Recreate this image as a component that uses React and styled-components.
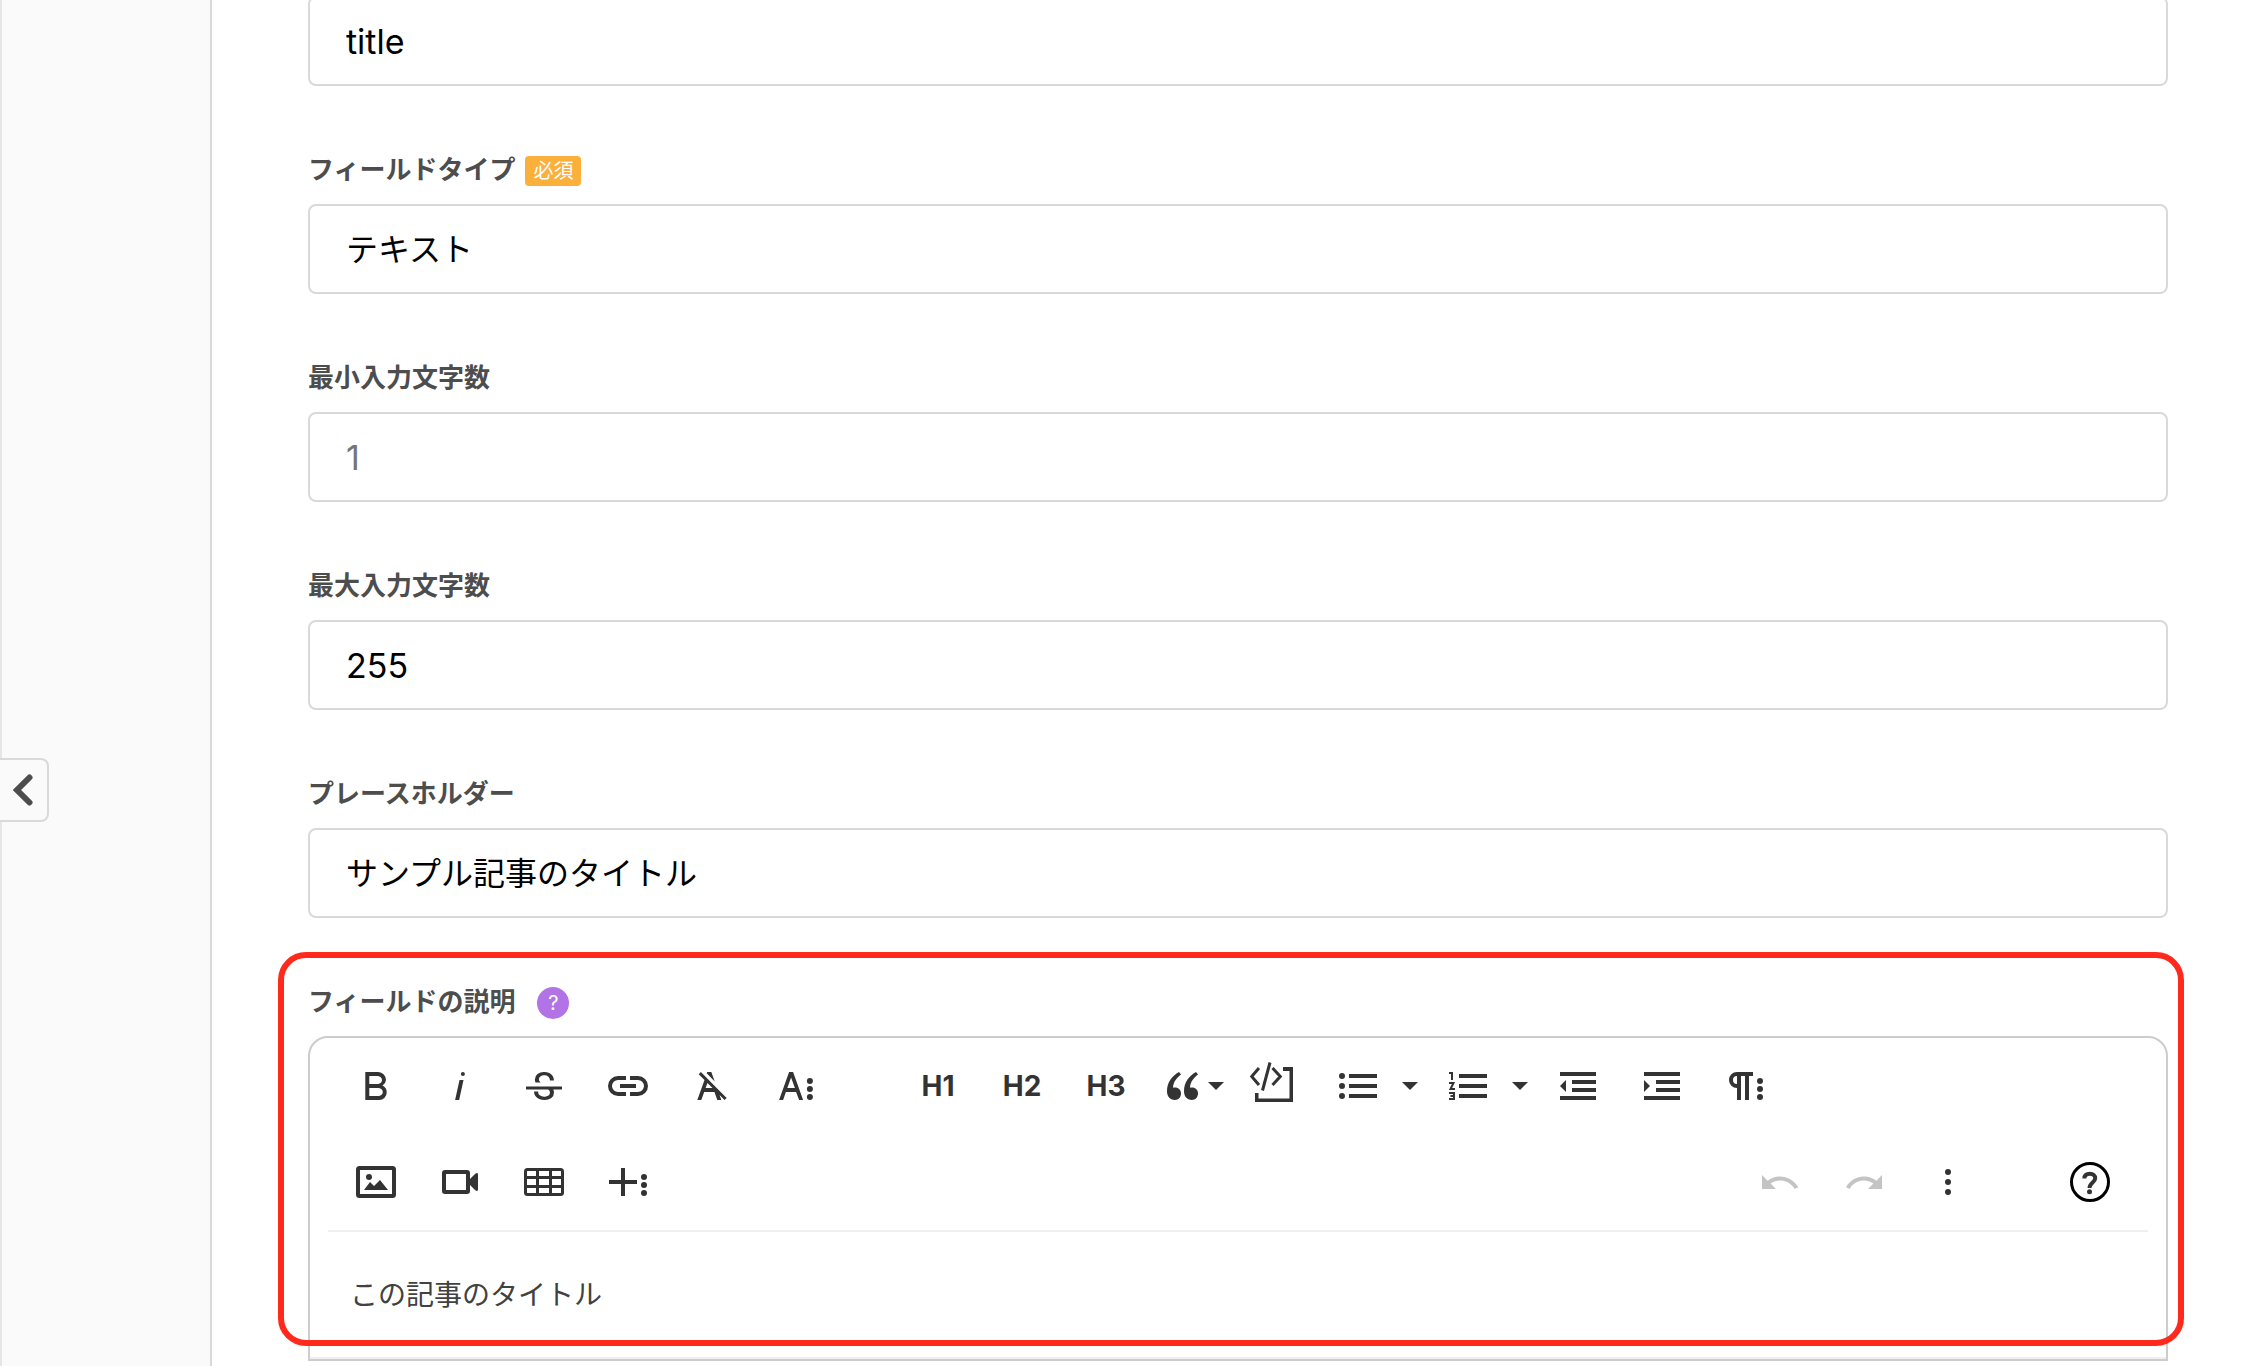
import React from "react";
import styled, { createGlobalStyle } from "styled-components";

const GlobalStyle = createGlobalStyle`
  * {
    box-sizing: border-box;
  }
  body {
    margin: 0;
    background: #fff;
    color: #4d4d4d;
    font-family: Inter, "Noto Sans CJK JP", sans-serif;
  }
  button,
  input,
  textarea {
    font-family: inherit;
  }
`;

const Page = styled.div`
  display: grid;
  grid-template-columns: 212px 1fr;
  min-height: 100vh;
`;

const Sidebar = styled.aside`
  position: relative;
  background: #fafafa;
  border-left: 2px solid #e6e6e6;
  border-right: 2px solid #d9d9d9;
`;

// sits on top of the sidebar edge
const CollapseButton = styled.button`
  position: absolute;
  top: 758px;
  left: -2px;
  display: flex;
  align-items: center;
  justify-content: center;
  width: 49px;
  height: 64px;
  padding: 0 2px 0 0;
  background: #fafafa;
  border: 2px solid #d9d9d9;
  border-left: 0;
  border-radius: 0 8px 8px 0;
  cursor: pointer;
`;

const Main = styled.main`
  overflow: hidden;
  padding: 0 92px 0 96px;
`;

const Form = styled.form`
  display: flex;
  flex-direction: column;
  gap: 64px;
  margin-top: -4px;
`;

const Field = styled.div`
  position: relative;
`;

const LabelRow = styled.div`
  display: flex;
  align-items: center;
  height: 40px;
  margin-bottom: 14px;
`;

const Label = styled.label`
  font-size: 26px;
  font-weight: 700;
  line-height: 40px;
`;

const Required = styled.span`
  margin: 2px 0 0 10px;
  padding: 0 8px;
  border-radius: 4px;
  background: #fbb03b;
  color: #fff;
  font-size: 20px;
  line-height: 30px;
`;

const HelpBadge = styled.button`
  width: 32px;
  height: 32px;
  margin: 2px 0 0 22px;
  padding: 0;
  border: 0;
  border-radius: 50%;
  background: #b273e6;
  color: #fff;
  font-size: 20px;
  line-height: 32px;
  cursor: pointer;
`;

// latin values are set a little larger than the kana ones
const Input = styled.input`
  display: block;
  width: 100%;
  height: 90px;
  padding: ${(props) => (props.$latin ? "0 36px" : "0 36px 4px")};
  border: 2px solid #dcd8da;
  border-radius: 8px;
  background: #fff;
  color: #000;
  font-size: ${(props) => (props.$latin ? "34px" : "32px")};
  outline: none;

  &::placeholder {
    color: #757575;
    opacity: 1;
  }
`;

const Highlight = styled.div`
  position: absolute;
  top: -30px;
  right: -16px;
  bottom: 15px;
  left: -30px;
  border: 6px solid #ff2a1c;
  border-radius: 28px;
  pointer-events: none;
`;

const Editor = styled.div`
  border: 2px solid #ccc;
  border-radius: 20px 20px 0 0;
  background: #fff;
`;

const Toolbar = styled.div`
  margin: 0 18px;
  padding: 8px 20px 8px 10px;
  border-bottom: 2px solid #efefef;
  display: flex;
  flex-direction: column;
  gap: 16px;
`;

const ToolbarRow = styled.div`
  display: flex;
  gap: 66px;
`;

const Group = styled.div`
  display: flex;
  gap: 8px;
  margin-left: ${(props) => (props.$right ? "auto" : "0")};
`;

const ToolButton = styled.button`
  display: flex;
  align-items: center;
  justify-content: center;
  width: 76px;
  height: 80px;
  padding: 0;
  border: 0;
  border-radius: 8px;
  background: transparent;
  color: #333;
  cursor: pointer;

  &:disabled {
    color: #c4c4c4;
    cursor: default;
  }
`;

const HeadingButton = styled(ToolButton)`
  font-size: 28px;
  font-weight: 700;
`;

const DropButton = styled(ToolButton)`
  width: 26px;
  margin-left: -8px;
  padding-left: 2px;
`;

const EditorText = styled.textarea`
  display: block;
  width: 100%;
  height: 127px;
  padding: 40px;
  border: 0;
  border-bottom: 2px solid #efefef;
  background: transparent;
  color: #414141;
  font-size: 28px;
  line-height: 46px;
  resize: none;
  outline: none;
  overflow: hidden;
`;

const Svg = styled.svg`
  display: block;
  flex: none;
  fill: currentColor;
`;

// 24 unit icons drawn at 48px
const ICONS = {
  bold: "M15.25,11.8h0A3.68,3.68,0,0,0,17,9a3.93,3.93,0,0,0-3.86-4H6.65V19h7a3.74,3.74,0,0,0,3.7-3.78V15.1A3.64,3.64,0,0,0,15.25,11.8ZM8.65,7h4.2a2.09,2.09,0,0,1,2,1.3,2.09,2.09,0,0,1-1.37,2.61,2.23,2.23,0,0,1-.63.09H8.65Zm4.6,10H8.65V13h4.6a2.09,2.09,0,0,1,2,1.3,2.09,2.09,0,0,1-1.37,2.61A2.23,2.23,0,0,1,13.25,17Z",
  italic: "M11.76,9h2l-2.2,10h-2Zm1.68-4a1,1,0,1,0,1,1,1,1,0,0,0-1-1Z",
  strike:
    "M3,12.2H21v1.5H16.63a3.6,3.6,0,0,1,.35,1.59,3.25,3.25,0,0,1-1.31,2.7A5.55,5.55,0,0,1,12.2,19a6.44,6.44,0,0,1-2.62-.54,4.46,4.46,0,0,1-1.89-1.49,3.67,3.67,0,0,1-.67-2.15V14.7H9.02v.11a2.18,2.18,0,0,0,.85,1.83,3.69,3.69,0,0,0,2.33.68,3.39,3.39,0,0,0,2.08-.55,1.73,1.73,0,0,0,.7-1.47,1.7,1.7,0,0,0-.65-1.43,3,3,0,0,0-.27-.17H3ZM16.34,7.06A4.18,4.18,0,0,0,14.62,5.55,5.63,5.63,0,0,0,12.11,5,5.16,5.16,0,0,0,8.75,6.06,3.36,3.36,0,0,0,7.44,8.77a3.23,3.23,0,0,0,.32,1.43h2.6c-.08-.05-.19-.11-.25-.16a1.61,1.61,0,0,1-.65-1.3,1.8,1.8,0,0,1,.69-1.51,3.13,3.13,0,0,1,1.97-.55,3.05,3.05,0,0,1,2.1.67,2.35,2.35,0,0,1,.74,1.83v.11h2V9.17A3.9,3.9,0,0,0,16.34,7.06Z",
  link: "M11,17H7A5,5,0,0,1,7,7h4V9H7a3,3,0,0,0,0,6h4ZM17,7H13V9h4a3,3,0,0,1,0,6H13v2h4A5,5,0,0,0,17,7Zm-1,4H8v2h8Z",
  clear:
    "M11.48,10.09l-1.2-1.21L8.8,7.41,6.43,5,5.37,6.1,8.25,9,4.66,19h2l1.43-4h5.14l1.43,4h2l-.89-2.51L18.27,19l1.07-1.06L14.59,13.2ZM8.8,13l.92-2.56L12.27,13ZM9.36,5.6L9.66,5h2l1.7,4.7Z",
  textMore:
    "M13.55,19h2l-5-14h-2l-5,14h2l1.4-4h5.1Zm-5.9-6,1.9-5.2L11.45,13Zm12.8,4.5a1.5,1.5,0,1,1-1.5-1.5A1.5,1.5,0,0,1,20.45,17.5Zm0-4a1.5,1.5,0,1,1-1.5-1.5A1.5,1.5,0,0,1,20.45,13.5Zm0-4A1.5,1.5,0,1,1,18.95,8,1.5,1.5,0,0,1,20.45,9.5Z",
  undo: "M10.4,9.4c-1.7,0.3-3.2,0.9-4.6,2L3,8.5v7h7l-2.7-2.7c3.7-2.6,8.8-1.8,11.5,1.9c0.2,0.3,0.4,0.5,0.5,0.8l1.8-0.9C18.9,10.8,14.7,8.7,10.4,9.4z",
  redo: "M13.6,9.4c1.7,0.3,3.2,0.9,4.6,2L21,8.5v7h-7l2.7-2.7C13,10.1,7.9,11,5.3,14.7c-0.2,0.3-0.4,0.5-0.5,0.8L3,14.6C5.1,10.8,9.3,8.7,13.6,9.4z",
};

function Icon({ name }) {
  return (
    <Svg width="48" height="48" viewBox="0 0 24 24" aria-hidden="true">
      <path d={ICONS[name]} fillRule="evenodd" />
    </Svg>
  );
}

function Canvas({ width = 48, children }) {
  return (
    <Svg
      width={width}
      height="48"
      viewBox={`0 0 ${width} 48`}
      aria-hidden="true"
    >
      {children}
    </Svg>
  );
}

function Dots({ x, ys }) {
  return ys.map((y) => <circle key={y} cx={x} cy={y} r="3" />);
}

function QuoteIcon() {
  const mark =
    "M12,0 L14,2.6 C9.5,6 6.4,10 6,15.8 C10.8,14.8 14,17.6 14,21.6 C14,25.4 11.4,28 7.8,28 C3,28 0,24.4 0,19 C0,10.6 5,4 12,0Z";
  return (
    <Canvas width={72}>
      <path transform="translate(13 10)" d={mark} />
      <path transform="translate(30 10)" d={mark} />
      <path d="M54,20h16l-8,8z" />
    </Canvas>
  );
}

function CodeIcon() {
  return (
    <Canvas>
      <path d="M33,5H43V40H5V31H8.500V36.500H39.500V9H33Z" />
      <g fill="none" stroke="currentColor" strokeWidth="3">
        <path d="M9,6 L1.700,14.500 L9,23" />
        <path d="M22.500,6 L30.300,14.500 L22.500,23" />
        <path d="M20,0.500 L12.500,28.500" />
      </g>
    </Canvas>
  );
}

function ListLines() {
  return <path d="M15,12h28v4h-28zM15,22h28v4h-28zM15,32h28v4h-28z" />;
}

function BulletIcon() {
  return (
    <Canvas>
      <Dots x={8} ys={[14, 24, 34]} />
      <ListLines />
    </Canvas>
  );
}

function NumberIcon() {
  return (
    <Canvas>
      <g fill="none" stroke="currentColor" strokeWidth="2">
        <path d="M5,11h3v7" />
        <path d="M5,21h4.500l-3,6h4.500" />
        <path d="M5,31h5v6h-5M6.500,34h3.500" />
      </g>
      <ListLines />
    </Canvas>
  );
}

function IndentIcon({ back }) {
  return (
    <Canvas>
      <path d="M6,10h36v4h-36zM18,18h24v4h-24zM18,26h24v4h-24zM6,34h36v4h-36z" />
      <path d={back ? "M12,18v12l-6,-6z" : "M6,18v12l6,-6z"} />
    </Canvas>
  );
}

function ParagraphIcon() {
  return (
    <Canvas>
      <path
        fillRule="evenodd"
        d="M31,10H15a8,8,0,0,0,0,16V38h4V14h4V38h4V14h4ZM15,14v8a4,4,0,0,1,0,-8Z"
      />
      <Dots x={38} ys={[19, 27, 35]} />
    </Canvas>
  );
}

function ImageIcon() {
  return (
    <Canvas>
      <rect
        x="6"
        y="10"
        width="36"
        height="28"
        rx="1.5"
        fill="none"
        stroke="currentColor"
        strokeWidth="4"
      />
      <circle cx="17" cy="19" r="3" />
      <path d="M12,32l6,-8 4,4 6,-6 8,10z" />
    </Canvas>
  );
}

function VideoIcon() {
  return (
    <Canvas>
      <rect
        x="8"
        y="14"
        width="24"
        height="20"
        rx="1"
        fill="none"
        stroke="currentColor"
        strokeWidth="4"
      />
      <path d="M34,21l5,-5q3,-2 3,0.500v15q0,2.500 -3,0.500l-5,-5z" />
    </Canvas>
  );
}

function TableIcon() {
  return (
    <Canvas>
      <g fill="none" stroke="currentColor" strokeWidth="3">
        <rect x="5.5" y="11.5" width="37" height="25" rx="2" />
        <path d="M17.5,11v26M30.5,11v26M5,19.5h38M5,28.5h38" />
      </g>
    </Canvas>
  );
}

function PlusIcon() {
  return (
    <Canvas>
      <path d="M17,10h4v12h12v4h-12v12h-4v-12h-12v-4h12z" />
      <Dots x={40} ys={[19, 27, 35]} />
    </Canvas>
  );
}

function HelpIcon() {
  return (
    <Canvas>
      <circle cx="24" cy="24" r="18.5" fill="none" stroke="#000" strokeWidth="3" />
      <path
        d="M18.4,20.5C18.4,17.5,20.6,15.8,24,15.8C27,15.8,29.2,17.6,29.2,20.3C29.2,24.5,23.5,24.5,23.5,30"
        fill="none"
        stroke="currentColor"
        strokeWidth="4"
      />
      <circle cx="23.5" cy="33.8" r="2.5" />
    </Canvas>
  );
}

function Caret({ label }) {
  return (
    <DropButton type="button" aria-label={label}>
      <Svg width="16" height="8" viewBox="0 0 16 8" aria-hidden="true">
        <path d="M0,0h16l-8,8z" />
      </Svg>
    </DropButton>
  );
}

function Tool({ label, disabled, children }) {
  return (
    <ToolButton type="button" aria-label={label} disabled={disabled}>
      {children}
    </ToolButton>
  );
}

const styleTools = [
  { icon: "bold", label: "太字" },
  { icon: "italic", label: "斜体" },
  { icon: "strike", label: "取り消し線" },
  { icon: "link", label: "リンクの挿入" },
  { icon: "clear", label: "書式のクリア" },
  { icon: "textMore", label: "その他の文字書式" },
];

const fields = [
  {
    id: "field-type",
    label: "フィールドタイプ",
    value: "テキスト",
    required: true,
    readOnly: true,
  },
  { id: "min-length", label: "最小入力文字数", placeholder: "1", latin: true },
  { id: "max-length", label: "最大入力文字数", value: "255", latin: true },
  {
    id: "placeholder",
    label: "プレースホルダー",
    value: "サンプル記事のタイトル",
  },
];

export default function App() {
  return (
    <>
      <GlobalStyle />
      <Page>
        <Sidebar>
          <CollapseButton type="button" aria-label="メニューを閉じる">
            <Svg width="20" height="32" viewBox="0 0 20 32" aria-hidden="true">
              <path
                d="M16.5,3.5L4,16L16.5,28.5"
                fill="none"
                stroke="#4d4d4d"
                strokeWidth="6"
                strokeLinecap="round"
              />
            </Svg>
          </CollapseButton>
        </Sidebar>
        <Main>
          <Form>
            <Input $latin aria-label="フィールドID" defaultValue="title" />
            {fields.map((field) => (
              <Field key={field.id}>
                <LabelRow>
                  <Label htmlFor={field.id}>{field.label}</Label>
                  {field.required && <Required>必須</Required>}
                </LabelRow>
                <Input
                  id={field.id}
                  $latin={field.latin}
                  defaultValue={field.value}
                  placeholder={field.placeholder}
                  readOnly={field.readOnly}
                />
              </Field>
            ))}
            <Field>
              <LabelRow>
                <Label htmlFor="description">フィールドの説明</Label>
                <HelpBadge type="button">?</HelpBadge>
              </LabelRow>
              <Editor>
                <Toolbar>
                  <ToolbarRow>
                    <Group>
                      {styleTools.map((tool) => (
                        <Tool key={tool.icon} label={tool.label}>
                          <Icon name={tool.icon} />
                        </Tool>
                      ))}
                    </Group>
                    <Group>
                      <HeadingButton type="button">H1</HeadingButton>
                      <HeadingButton type="button">H2</HeadingButton>
                      <HeadingButton type="button">H3</HeadingButton>
                      <Tool label="引用">
                        <QuoteIcon />
                      </Tool>
                      <Tool label="コード">
                        <CodeIcon />
                      </Tool>
                      <Tool label="箇条書き">
                        <BulletIcon />
                      </Tool>
                      <Caret label="箇条書きの種類" />
                      <Tool label="番号付きリスト">
                        <NumberIcon />
                      </Tool>
                      <Caret label="番号付きリストの種類" />
                      <Tool label="インデントを減らす">
                        <IndentIcon back />
                      </Tool>
                      <Tool label="インデントを増やす">
                        <IndentIcon />
                      </Tool>
                      <Tool label="その他の段落書式">
                        <ParagraphIcon />
                      </Tool>
                    </Group>
                  </ToolbarRow>
                  <ToolbarRow>
                    <Group>
                      <Tool label="画像の挿入">
                        <ImageIcon />
                      </Tool>
                      <Tool label="動画の挿入">
                        <VideoIcon />
                      </Tool>
                      <Tool label="表の挿入">
                        <TableIcon />
                      </Tool>
                      <Tool label="その他の挿入">
                        <PlusIcon />
                      </Tool>
                    </Group>
                    <Group $right>
                      <Tool label="元に戻す" disabled>
                        <Icon name="undo" />
                      </Tool>
                      <Tool label="やり直す" disabled>
                        <Icon name="redo" />
                      </Tool>
                      <Tool label="その他">
                        <Canvas>
                          <Dots x={24} ys={[14, 24, 34]} />
                        </Canvas>
                      </Tool>
                    </Group>
                    <Group>
                      <Tool label="ヘルプ">
                        <HelpIcon />
                      </Tool>
                    </Group>
                  </ToolbarRow>
                </Toolbar>
                <EditorText id="description" defaultValue="この記事のタイトル" />
              </Editor>
              <Highlight />
            </Field>
          </Form>
        </Main>
      </Page>
    </>
  );
}
